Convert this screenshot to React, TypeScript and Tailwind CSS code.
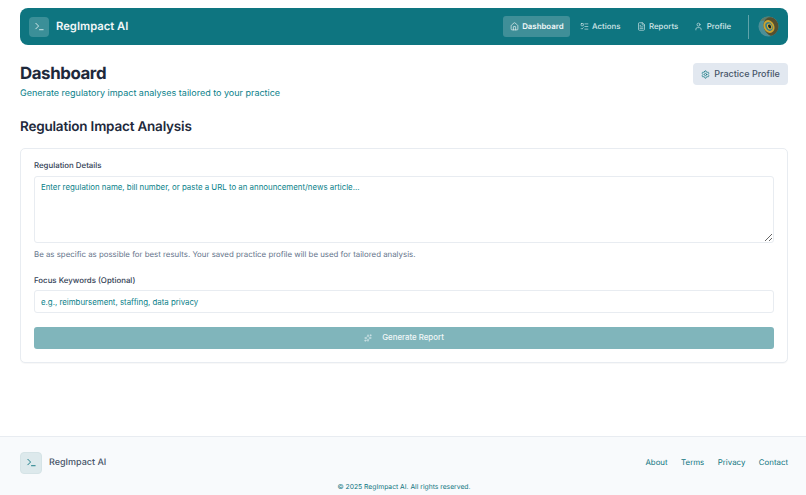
import { Home, ListTodo, FileText, User, Settings, Sparkles, Terminal } from "lucide-react";
import { ReactNode } from "react";

function NavItem({ icon, label, active }: { icon: ReactNode; label: string; active?: boolean }) {
  return (
    <a className={`flex items-center gap-[3.5px] h-[20.5px] px-[6.5px] rounded-[3px] text-[7.875px] ${active ? "bg-[#3f8f98] font-semibold text-[#f1f7f8]" : "font-medium text-[#d3e6e8]"}`}>
      {icon}
      <span>{label}</span>
    </a>
  );
}

function Avatar() {
  return (
    <svg width="21" height="21" viewBox="0 0 22 22" className="shrink-0">
      <defs>
        <clipPath id="c"><circle cx="11" cy="11" r="10.5" /></clipPath>
      </defs>
      <g clipPath="url(#c)">
        <rect width="22" height="22" fill="#4d8f96" />
        <rect x="0" y="0" width="22" height="5" fill="#5c7c6a" />
        <ellipse cx="14" cy="11" rx="8" ry="10" fill="#55502f" transform="rotate(-20 14 11)" />
        <ellipse cx="11.5" cy="11" rx="5.5" ry="7" fill="#c9a431" transform="rotate(-25 11.5 11)" />
        <ellipse cx="11.5" cy="11" rx="3.6" ry="4.8" fill="#3f7f8a" transform="rotate(-25 11.5 11)" />
        <ellipse cx="12" cy="11" rx="2.4" ry="3.2" fill="#e0b82e" transform="rotate(-25 12 11)" />
        <ellipse cx="12.2" cy="11" rx="1.5" ry="2.2" fill="#14222a" transform="rotate(-25 12.2 11)" />
      </g>
    </svg>
  );
}

export default function App() {
  return (
    <div className="h-[495px] overflow-hidden flex flex-col bg-white font-['Inter',sans-serif] [text-rendering:geometricPrecision]">
      <div className="flex-1 pl-5 pr-[18px] pt-2">
        <header className="h-[37px] rounded-[8px] bg-[#0e7580] flex items-center justify-between pl-[9px] pr-[9px]">
          <div className="flex items-center gap-[7px]">
            <div className="w-5 h-5 rounded-[4px] bg-[#3b8f98] flex items-center justify-center text-[#dcecee]">
              <Terminal size={11} strokeWidth={2} />
            </div>
            <span className="text-[11.25px] font-semibold text-[#f1f7f8]">RegImpact AI</span>
          </div>
          <div className="flex items-center">
            <nav className="flex items-center gap-[3px]">
              <NavItem active label="Dashboard" icon={<Home size={9} strokeWidth={1.75} />} />
              <NavItem label="Actions" icon={<ListTodo size={9} strokeWidth={1.75} />} />
              <NavItem label="Reports" icon={<FileText size={9} strokeWidth={1.75} />} />
              <NavItem label="Profile" icon={<User size={9} strokeWidth={1.75} />} />
            </nav>
            <div className="w-px h-6 bg-[#5fa3aa] ml-[10.5px] mr-[9px]" />
            <Avatar />
          </div>
        </header>

        <div className="flex items-start justify-between mt-[18px]">
          <div>
            <h1 className="text-[16.875px] leading-[20px] font-bold tracking-tight text-[#1e293b] mt-[1px]">Dashboard</h1>
            <p className="text-[9px] leading-[14px] text-[#0a7f8a] mt-[3px]">Generate regulatory impact analyses tailored to your practice</p>
          </div>
          <button className="flex items-center gap-[4px] h-[22px] w-[95px] justify-center rounded-[4px] bg-[#e2e8f0] text-[9px] font-medium text-[#475569]">
            <Settings size={9} strokeWidth={2} className="text-[#0e7580]" />
            Practice Profile
          </button>
        </div>

        <h2 className="text-[13.5px] leading-[18px] font-semibold tracking-[-0.2px] text-[#1e293b] mt-[17px]">Regulation Impact Analysis</h2>

        <section className="mt-[12px] h-[215px] rounded-[5px] border border-[#e8ecf1] bg-white px-[13px] pt-[11px] shadow-[0_1px_1px_rgba(0,0,0,0.03)]">
          <label className="block text-[7.875px] leading-[11px] font-medium text-[#334155]">Regulation Details</label>
          <textarea
            className="block w-full h-[67px] mt-[5px] rounded-[3px] border border-[#e8ecf1] px-[6px] py-[5px] text-[7.875px] leading-[11px] text-[#0a7f8a] placeholder:text-[#0a7f8a] outline-none"
            placeholder="Enter regulation name, bill number, or paste a URL to an announcement/news article..."
          />
          <p className="text-[7.875px] leading-[11px] text-[#64748b] mt-[6px]">Be as specific as possible for best results. Your saved practice profile will be used for tailored analysis.</p>
          <label className="block text-[7.875px] leading-[11px] font-medium text-[#334155] mt-[15px]">Focus Keywords (Optional)</label>
          <input
            className="block w-full h-[22.5px] mt-[4px] rounded-[3px] border border-[#e8ecf1] px-[6px] pt-[1px] text-[7.875px] text-[#0a7f8a] placeholder:text-[#0a7f8a] outline-none"
            placeholder="e.g., reimbursement, staffing, data privacy"
          />
          <button className="flex items-center justify-center gap-[10px] w-full h-[22px] mt-[14px] rounded-[3px] bg-[#80b5bb] text-[7.875px] font-medium text-[#f1f7f8]">
            <Sparkles size={8} strokeWidth={1.5} />
            Generate Report
          </button>
        </section>
      </div>

      <footer className="h-[59px] border-t border-[#e8ecf1] bg-[#f8fafc] pl-5 pr-[18px] shrink-0">
        <div className="flex items-center justify-between mt-[14.5px]">
          <div className="flex items-center gap-[7px]">
            <div className="w-[22px] h-[22px] rounded-[4px] bg-[#dde9ec] border border-[#d5e3e6] flex items-center justify-center text-[#0e7580]">
              <Terminal size={11} strokeWidth={2} />
            </div>
            <span className="text-[9px] font-medium text-[#475569]">RegImpact AI</span>
          </div>
          <div className="flex items-center gap-[13.5px] text-[7.875px] text-[#0e7580]">
            <a>About</a>
            <a>Terms</a>
            <a>Privacy</a>
            <a>Contact</a>
          </div>
        </div>
        <p className="text-center text-[6.75px] leading-[9px] text-[#0e7580] mt-[8.5px]">© 2025 RegImpact AI. All rights reserved.</p>
      </footer>
    </div>
  );
}
